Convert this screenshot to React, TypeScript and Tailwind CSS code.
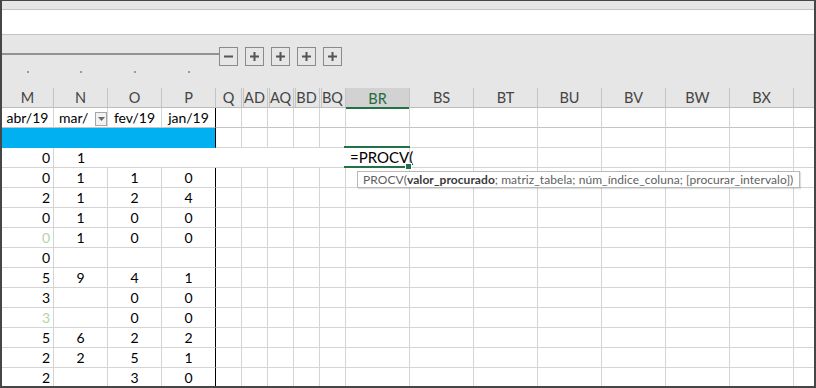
import React from "react";

type Col = { name: string; w: string; hidden?: boolean };

const cols: Col[] = [
  { name: "M", w: "w-[52px]" },
  { name: "N", w: "w-[54px]" },
  { name: "O", w: "w-[54px]" },
  { name: "P", w: "w-[54px]" },
  { name: "Q", w: "w-[26px]" },
  { name: "AD", w: "w-[26px]", hidden: true },
  { name: "AQ", w: "w-[26px]", hidden: true },
  { name: "BD", w: "w-[26px]", hidden: true },
  { name: "BQ", w: "w-[26px]", hidden: true },
  { name: "BR", w: "w-[64px]" },
  { name: "BS", w: "w-[64px]" },
  { name: "BT", w: "w-[64px]" },
  { name: "BU", w: "w-[64px]" },
  { name: "BV", w: "w-[64px]" },
  { name: "BW", w: "w-[64px]" },
  { name: "BX", w: "w-[64px]" },
  { name: "", w: "w-[20px]" },
];

// M, N, O, P values; pale = M value shown in light green
const rows: { v: string[]; pale?: boolean }[] = [
  { v: ["0", "1", "1", "0"] },
  { v: ["2", "1", "2", "4"] },
  { v: ["0", "1", "0", "0"] },
  { v: ["0", "1", "0", "0"], pale: true },
  { v: ["0", "", "", ""] },
  { v: ["5", "9", "4", "1"] },
  { v: ["3", "", "0", "0"] },
  { v: ["3", "", "0", "0"], pale: true },
  { v: ["5", "6", "2", "2"] },
  { v: ["2", "2", "5", "1"] },
  { v: ["2", "", "3", "0"] },
];

function cellBorder(i: number) {
  if (i === cols.length - 1) return "";
  if (i === 3) return "border-r border-r-black";
  return "border-r border-r-[#d4d4d4]";
}

function OutlineButton({ minus }: { minus?: boolean }) {
  return (
    <div className="w-[19px] h-[19px] border border-[#8a8a8a] flex items-center justify-center">
      <svg width="9" height="9" viewBox="0 0 9 9">
        <rect x="0" y="3.5" width="9" height="2" fill="#555" />
        {!minus && <rect x="3.5" y="0" width="2" height="9" fill="#555" />}
      </svg>
    </div>
  );
}

function DataRow({ v, pale }: { v: string[]; pale?: boolean }) {
  return (
    <div className="flex h-[20px]">
      {cols.map((c, i) => (
        <div
          key={i}
          className={`${c.w} shrink-0 h-[20px] border-b border-b-[#d4d4d4] ${cellBorder(i)} flex items-end leading-[19px] ${
            i === 0 ? "justify-end pr-[3px]" : "justify-center"
          } ${i === 0 && pale ? "text-[#b5d4a2]" : "text-black"}`}
        >
          {i < 4 ? v[i] : ""}
        </div>
      ))}
    </div>
  );
}

export default function App() {
  return (
    <div className="w-[816px] h-[388px] overflow-hidden bg-white border-t border-x-2 border-b-2 border-[#464646] font-[Lato,sans-serif] text-[14px]">
      <div className="h-[9px] bg-[#e6e6e6] border-b border-[#c3c3c3]" />
      <div className="h-[25px] bg-white border-b border-[#c3c3c3]" />

      <div className="h-[53px] bg-[#e6e6e6] pt-[12px]">
        <div className="flex">
          <div className="w-[217px] h-[2px] mt-[6px] bg-[#929292]" />
          <div className="flex gap-[7px]">
            <OutlineButton minus />
            <OutlineButton />
            <OutlineButton />
            <OutlineButton />
            <OutlineButton />
          </div>
        </div>
        <div className="flex mt-[5px]">
          {cols.slice(0, 4).map((c, i) => (
            <div key={i} className={`${c.w} flex justify-center`}>
              <div className="w-[2px] h-[2px] bg-[#9a9a9a]" />
            </div>
          ))}
        </div>
      </div>

      <div className="relative">
        <div className="flex h-[20px] bg-[#e6e6e6] border-b border-[#bdbdbd] text-[#444] text-[14.5px]">
          {cols.map((c, i) => (
            <div
              key={i}
              className={`${c.w} shrink-0 h-[19px] flex items-center justify-center ${
                i === cols.length - 1 ? "" : "border-r border-r-[#c4c4c4]"
              } ${c.hidden ? "shadow-[inset_1px_0_0_#e6e6e6,inset_2px_0_0_#c4c4c4]" : ""} ${
                c.name === "BR" ? "bg-[#d2d2d2] text-[#1e6b3f] shadow-[inset_0_-2px_0_#217346] h-[21px] mb-[-2px]" : ""
              }`}
            >
              {c.name}
            </div>
          ))}
        </div>

        <div className="flex h-[20px]">
          {cols.map((c, i) => (
            <div
              key={i}
              className={`${c.w} shrink-0 h-[20px] border-b border-b-[#c4c4c4] ${cellBorder(i)} flex items-end leading-[19px] justify-center text-black`}
            >
              {i === 0 && "abr/19"}
              {i === 1 && (
                <div className="flex w-full items-end">
                  <span className="pl-[5px]">mar/</span>
                  <div className="ml-auto mb-px w-[12px] h-[14px] bg-[#f2f2f2] border border-[#a6a6a6] flex items-center justify-center">
                    <svg width="7" height="4" viewBox="0 0 7 4">
                      <path d="M0 0 L7 0 L3.5 4 Z" fill="#6a6a6a" />
                    </svg>
                  </div>
                </div>
              )}
              {i === 2 && "fev/19"}
              {i === 3 && "jan/19"}
            </div>
          ))}
        </div>

        <div className="flex h-[20px]">
          {cols.map((c, i) => (
            <div
              key={i}
              className={`${c.w} shrink-0 h-[20px] ${
                i < 4 ? "bg-[#00b0f0] border-b border-b-[#00b0f0]" : "border-b border-b-[#d4d4d4]"
              } ${i < 3 ? "" : cellBorder(i)}`}
            />
          ))}
        </div>

        <div className="flex h-[20px]">
          {cols.map((c, i) => (
            <div
              key={i}
              className={`${c.w} shrink-0 h-[20px] border-b border-b-[#d4d4d4] leading-[19px] flex items-end ${
                i === 0 || i >= 9 ? cellBorder(i) : ""
              } ${i === 0 ? "justify-end pr-[3px]" : i === 9 ? "justify-start pl-[4px] overflow-visible whitespace-nowrap" : "justify-center"}`}
            >
              {i === 0 && "0"}
              {i === 1 && "1"}
              {i === 9 && <span className="text-black text-[15px]">=PROCV(</span>}
            </div>
          ))}
        </div>

        {rows.map((r, k) => (
          <DataRow key={k} v={r.v} pale={r.pale} />
        ))}

        <div className="absolute left-[342px] top-[58px] w-[66px] h-[2px] bg-[#217346]" />
        <div className="absolute left-[342px] top-[78px] w-[61px] h-[2px] bg-[#217346]" />
        <div className="absolute left-[403px] top-[75px] w-[7px] h-[7px] bg-[#217346] border border-white" />

        <div className="absolute left-[355px] top-[83px] w-[443px] h-[17px] bg-white border border-[#b8b8b8] shadow-[1px_1px_1px_rgba(0,0,0,0.12)] pl-[5px] text-[12px] tracking-[0.06px] leading-[15px] text-[#5f5f5f] whitespace-nowrap">
          PROCV(<b className="text-[#3a3a3a]">valor_procurado</b>; matriz_tabela; núm_índice_coluna; [procurar_intervalo])
        </div>
      </div>
    </div>
  );
}
